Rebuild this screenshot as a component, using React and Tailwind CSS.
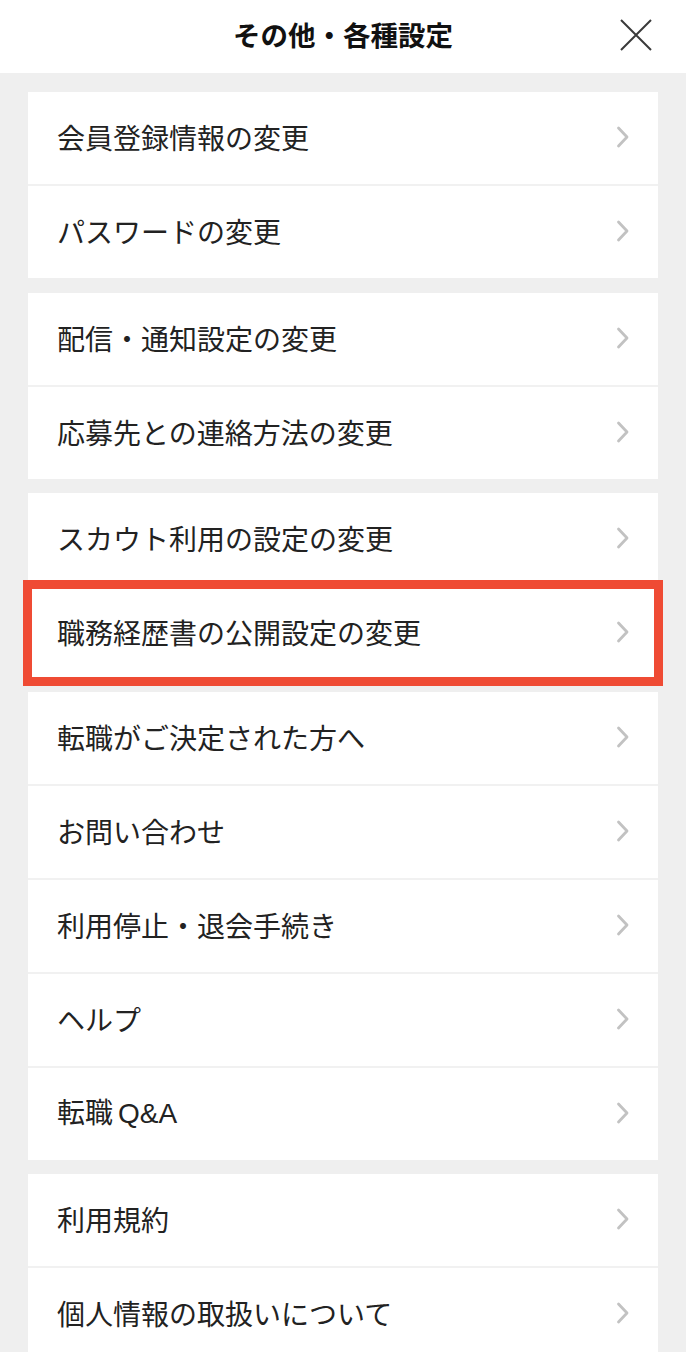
import React from 'react';

const groups = [
  { gap: 'mt-[19px]', items: ['会員登録情報の変更', 'パスワードの変更'] },
  { gap: 'mt-[15px]', items: ['配信・通知設定の変更', '応募先との連絡方法の変更'] },
  { gap: 'mt-[14px]', items: ['スカウト利用の設定の変更', '職務経歴書の公開設定の変更'], highlight: 1 },
  {
    gap: 'mt-[13px]',
    items: ['転職がご決定された方へ', 'お問い合わせ', '利用停止・退会手続き', 'ヘルプ', '転職Q&A'],
  },
  { gap: 'mt-[14px]', items: ['利用規約', '個人情報の取扱いについて'] },
];

function Chevron() {
  return (
    <svg width="14" height="22" viewBox="0 0 14 22" fill="none" className="shrink-0">
      <path d="M2.5 2 L11 11 L2.5 20" stroke="#c2c2c2" strokeWidth="2.8" strokeLinecap="round" strokeLinejoin="round" />
    </svg>
  );
}

function Label({ text }) {
  // Q&A is set in a Latin face with a little space, as in the app
  if (text === '転職Q&A') {
    return (
      <span className="text-[28px] leading-none text-[#222]">
        転職
        <span className="ml-[5px]" style={{ fontFamily: '"Liberation Sans", sans-serif' }}>Q&amp;A</span>
      </span>
    );
  }
  return <span className="text-[28px] leading-none text-[#222]">{text}</span>;
}

function Row({ label, highlight }) {
  return (
    <div className="relative">
      <button className="w-full h-[92px] flex items-center justify-between pl-[29px] pr-[28px] pb-[3px] bg-white text-left">
        <Label text={label} />
        <Chevron />
      </button>
      {highlight && (
        <div className="absolute -top-[7px] -bottom-[7px] -left-[5px] -right-[5px] border-[9px] border-[#ef4b34] pointer-events-none" />
      )}
    </div>
  );
}

export default function App() {
  return (
    <div
      className="min-h-screen bg-[#efefef]"
      style={{ fontFamily: '"Noto Sans CJK JP", "Noto Sans", sans-serif' }}
    >
      <header className="h-[73px] bg-white flex items-center justify-center pb-[3px] relative">
        <h1 className="text-[27.5px] font-bold text-[#111] leading-none">その他・各種設定</h1>
        <button className="absolute right-[34px] top-[19px] w-[32px] h-[32px]" aria-label="閉じる">
          <svg width="32" height="32" viewBox="0 0 32 32" fill="none">
            <path d="M1 1 L31 31 M31 1 L1 31" stroke="#3a3a3a" strokeWidth="2" />
          </svg>
        </button>
      </header>

      <div className="px-[28px]">
        {groups.map((g, gi) => (
          <div key={gi} className={`${g.gap} bg-white`}>
            {g.items.map((item, i) => (
              <React.Fragment key={item}>
                {i > 0 && <div className="h-[2px] bg-[#f1f1f1]" />}
                <Row label={item} highlight={g.highlight === i} />
              </React.Fragment>
            ))}
          </div>
        ))}
      </div>
    </div>
  );
}
